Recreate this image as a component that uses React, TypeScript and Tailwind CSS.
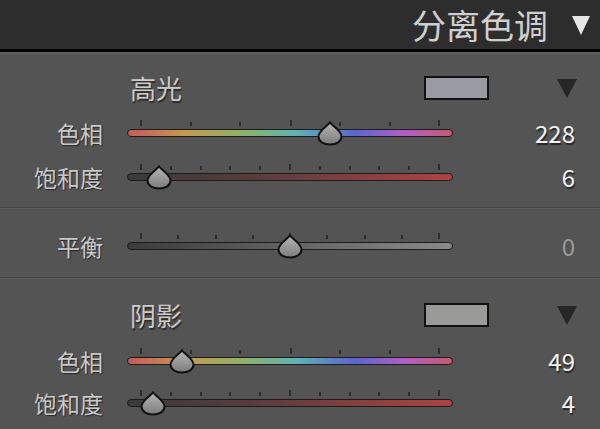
import React from "react";

const font = "font-['Noto_Sans_CJK_SC','Noto_Sans',sans-serif]";

type Kind = "hue" | "sat" | "bal";

const trackBg: Record<Kind, string> = {
  hue: "bg-[linear-gradient(to_right,#c65a5a,#c39a52_18%,#8cb26a_36%,#5fb2b6_52%,#5a66cf_70%,#b05ec6_85%,#c65a70)]",
  sat: "bg-[linear-gradient(to_right,#3a3a3a,#5a3c3c_40%,#b04242)]",
  bal: "bg-[linear-gradient(to_right,#3b3b3b,#8a8a8a)]",
};

// tick positions inside the 326px slider (first/last tick = min/max)
const ticks: Record<Kind, { x: number; major: boolean }[]> = {
  hue: [14, 64, 113, 164, 213, 263, 312].map((x, i) => ({ x, major: i % 3 === 0 })),
  sat: Array.from({ length: 11 }, (_, i) => ({ x: 14 + i * 29.8, major: i % 5 === 0 })),
  bal: Array.from({ length: 9 }, (_, i) => ({ x: 14 + i * 37.25, major: i % 4 === 0 })),
};

const Thumb = ({ x }: { x: number }) => (
  <svg
    width="28"
    height="25"
    viewBox="0 0 28 25"
    className="absolute top-0"
    style={{ left: x - 14 }}
  >
    <defs>
      <linearGradient id="tg" x1="0" y1="0" x2="0" y2="1">
        <stop offset="0" stopColor="#b6b6b6" />
        <stop offset="1" stopColor="#7c7c7c" />
      </linearGradient>
    </defs>
    <path
      d="M14 1.5 C15.5 4 25.5 9.5 25.5 15.5 C25.5 20.5 20.5 23.5 14 23.5 C7.5 23.5 2.5 20.5 2.5 15.5 C2.5 9.5 12.5 4 14 1.5 Z"
      fill="url(#tg)"
      stroke="#111"
      strokeWidth="2"
    />
  </svg>
);

const Slider = ({ kind, pos }: { kind: Kind; pos: number }) => (
  <div className="relative w-[326px] h-[25px] ml-[24px]">
    {ticks[kind].map((t, i) => (
      <div
        key={i}
        className={`absolute w-[2px] bg-[#2c2c2c] ${t.major ? "top-[-1px] h-[6px]" : "top-[1px] h-[4px]"}`}
        style={{ left: Math.round(t.x) - 1 }}
      />
    ))}
    <div className={`absolute left-0 right-0 top-[8px] h-[8px] rounded-full border-[1.5px] border-[#1c1c1c] ${trackBg[kind]}`} />
    <Thumb x={14 + pos * 298} />
  </div>
);

const Row = ({
  label,
  kind,
  pos,
  value,
  dim,
  h,
}: {
  label: string;
  kind: Kind;
  pos: number;
  value: string;
  dim?: boolean;
  h: string;
}) => (
  <div className={`flex items-center ${h}`}>
    <div className="w-[103px] text-right text-[23px] leading-none text-[#c9c9c9] [text-shadow:1px_1px_1px_#262626]">
      {label}
    </div>
    <Slider kind={kind} pos={pos} />
    <div
      className={`flex-1 pr-[25px] text-right text-[24px] leading-none ${
        dim ? "text-[#9b9b9b]" : "text-[#f2f2f2] [text-shadow:1px_2px_1px_#262626]"
      }`}
    >
      {value}
    </div>
  </div>
);

const Title = ({ text, swatch }: { text: string; swatch: string }) => (
  <div className="flex items-center h-[36px]">
    <div className="ml-[130px] w-[294px] text-[26px] leading-none text-[#cbcbcb] [text-shadow:1px_2px_1px_#2a2a2a]">
      {text}
    </div>
    <div className={`w-[65px] h-[24px] border-2 border-[#111] ${swatch}`} />
    <svg width="20" height="20" viewBox="0 0 20 20" className="ml-[68px]">
      <path d="M0 1 H20 L10 20 Z" fill="#262626" />
    </svg>
  </div>
);

const Divider = () => (
  <div>
    <div className="h-[1px] bg-[#444]" />
    <div className="h-[1px] bg-[#5c5c5c]" />
  </div>
);

const App = () => {
  return (
    <div className={`w-[600px] h-[429px] overflow-hidden bg-[#545454] ${font}`}>
      <div className="h-[52px] bg-[#2d2d2d] border-b-[3px] border-black flex items-center justify-end pr-[10px]">
        <span className="text-[34px] leading-none text-[#cfcfcf]">分离色调</span>
        <svg width="18" height="20" viewBox="0 0 18 20" className="ml-[24px]">
          <path d="M0 1 H18 L9 20 Z" fill="#e6e6e6" />
        </svg>
      </div>
      <div className="h-[2px] bg-[#606060]" />

      <section className="pt-[16px] pb-[8px]">
        <Title text="高光" swatch="bg-[#9a9aa5]" />
        <div className="mt-[5px]">
          <Row label="色相" kind="hue" pos={228 / 360} value="228" h="h-[44px]" />
          <Row label="饱和度" kind="sat" pos={0.06} value="6" h="h-[44px]" />
        </div>
      </section>

      <Divider />

      <section className="pt-[15px] pb-[9px]">
        <Row label="平衡" kind="bal" pos={0.5} value="0" dim h="h-[44px]" />
      </section>

      <Divider />

      <section className="pt-[18px]">
        <Title text="阴影" swatch="bg-[#9a9a98]" />
        <div className="mt-[6px]">
          <Row label="色相" kind="hue" pos={49 / 360} value="49" h="h-[44px]" />
          <Row label="饱和度" kind="sat" pos={0.04} value="4" h="h-[40px]" />
        </div>
      </section>
    </div>
  );
};

export default App;
